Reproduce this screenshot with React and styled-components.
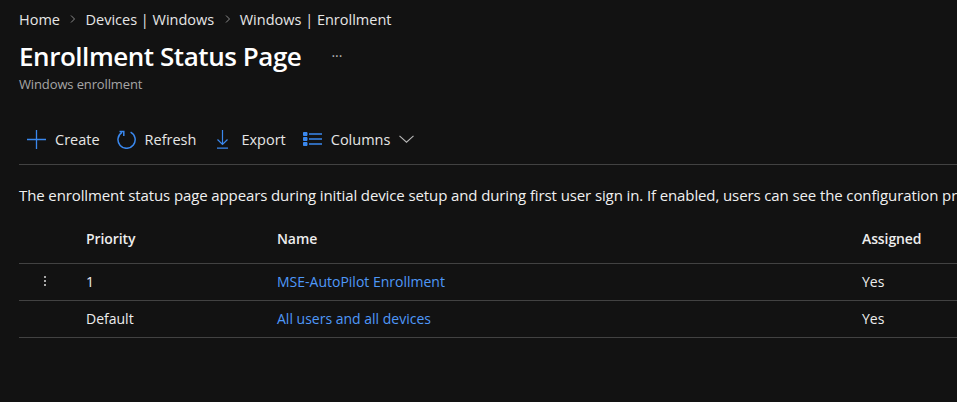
import React from "react";
import styled, { createGlobalStyle } from "styled-components";

const GlobalStyle = createGlobalStyle`
  html, body {
    margin: 0;
    background: #121212;
    overflow: hidden;
  }
  body {
    font-family: "Open Sans", "Noto Sans", "Liberation Sans", sans-serif;
    color: #fff;
  }
`;

const Page = styled.div`
  width: 957px;
  height: 402px;
  overflow: hidden;
  background: #121212;
  padding-left: 19px;
  box-sizing: border-box;
`;

const Breadcrumbs = styled.nav`
  display: flex;
  align-items: center;
  height: 20px;
  margin-top: 9px;
  font-size: 14.5px;
  color: #e6e6e6;
`;

const Chevron = styled.svg`
  width: 8px;
  height: 8px;
  margin: 0 8px 0 9.5px;
  stroke: #8a8a8a;
  fill: none;
`;

const TitleRow = styled.div`
  display: flex;
  align-items: center;
  height: 36px;
  margin-top: 9px;
`;

const Title = styled.h1`
  margin: 0;
  font-size: 26px;
  font-weight: 600;
  letter-spacing: -0.45px;
  color: #fff;
`;

const More = styled.span`
  margin-left: 30px;
  font-size: 14px;
  line-height: 1;
  color: #b5b5b5;
`;

const Subtitle = styled.div`
  height: 18px;
  margin-top: 1px;
  font-size: 13px;
  line-height: 18px;
  letter-spacing: -0.13px;
  color: #a6a6a6;
`;

const Toolbar = styled.div`
  display: flex;
  align-items: center;
  height: 49px;
  margin-top: 23px;
  padding: 0 0 2px 8px;
  box-sizing: border-box;
  border-bottom: 1px solid #424242;
`;

const ToolButton = styled.button`
  display: flex;
  align-items: center;
  gap: ${(p) => p.$gap || 8}px;
  margin: 0 ${(p) => p.$after || 0}px 0 0;
  padding: 0;
  height: 24px;
  border: 0;
  background: none;
  font: inherit;
  font-size: 14.5px;
  color: #e6e6e6;
  svg {
    flex: none;
    stroke: #3a88ee;
    fill: none;
  }
`;

const Caret = styled.svg`
  && {
    stroke: #b8b8b8;
  }
`;

const Description = styled.p`
  margin: 20px 0 0;
  height: 20px;
  font-size: 15px;
  line-height: 20px;
  letter-spacing: -0.11px;
  white-space: nowrap;
  color: #f0f0f0;
`;

const Row = styled.div`
  display: grid;
  grid-template-columns: 67px 191px 585px 1fr;
  align-items: center;
  height: ${(p) => p.$height}px;
  padding-bottom: 2px;
  box-sizing: border-box;
  border-bottom: 1px solid #424242;
  font-size: 14px;
  color: #ededed;
`;

const HeadRow = styled(Row)`
  margin-top: 15px;
  font-weight: 600;
  letter-spacing: -0.1px;
  padding-bottom: 7px;
`;

const Dots = styled.span`
  display: flex;
  flex-direction: column;
  gap: 2px;
  margin-left: 25px;
  i {
    width: 2px;
    height: 2px;
    background: #a8a8a8;
  }
`;

const NameLink = styled.a`
  color: #4f98f8;
`;

const rows = [
  { priority: "1", name: "MSE-AutoPilot Enrollment", assigned: "Yes", menu: true },
  { priority: "Default", name: "All users and all devices", assigned: "Yes" },
];

const App = () => (
  <Page>
    <GlobalStyle />
    <Breadcrumbs>
      Home
      <Chevron viewBox="0 0 8 8"><path d="M2 .5 5.5 4 2 7.5" /></Chevron>
      Devices | Windows
      <Chevron viewBox="0 0 8 8"><path d="M2 .5 5.5 4 2 7.5" /></Chevron>
      Windows | Enrollment
    </Breadcrumbs>
    <TitleRow>
      <Title>Enrollment Status Page</Title>
      <More>···</More>
    </TitleRow>
    <Subtitle>Windows enrollment</Subtitle>
    <Toolbar>
      <ToolButton $gap={9} $after={17}>
        <svg width="19" height="19" viewBox="0 0 19 19" strokeWidth="1.3"><path d="M9.5 0v19M0 9.5h19" /></svg>
        Create
      </ToolButton>
      <ToolButton $gap={9} $after={20}>
        <svg width="19" height="19" viewBox="0 0 19 19" strokeWidth="1.5"><path d="M5 2.4a8.6 8.6 0 1 0 8.6-.3M6.8 6V1.5H2.5" /></svg>
        Refresh
      </ToolButton>
      <ToolButton $gap={12} $after={17}>
        <svg width="13" height="19" viewBox="0 0 13 19" strokeWidth="1.2"><path d="M6.5 0v14M1.5 9.5l5 5 5-5M1 18.2h11" /></svg>
        Export
      </ToolButton>
      <ToolButton $gap={9}>
        <svg width="19" height="14" viewBox="0 0 19 14" strokeWidth="1.5">
          <path d="M6 2h13M6 7h13M6 12h13" />
          <path d="M.5.5h3.5v3h-3.5zM.5 5.5h3.5v3h-3.5zM.5 10.5h3.5v3h-3.5z" fill="#3a88ee" strokeWidth="1" />
        </svg>
        Columns
        <Caret width="15" height="8" viewBox="0 0 15 8" strokeWidth="1.1"><path d="M.5.8 7.5 7.2 14.5.8" /></Caret>
      </ToolButton>
    </Toolbar>
    <Description>
      The enrollment status page appears during initial device setup and during first user sign in. If enabled, users can see the configuration progress of assigned apps and profiles targeted to their device.
    </Description>
    <HeadRow $height={44}>
      <span />
      <span>Priority</span>
      <span>Name</span>
      <span>Assigned</span>
    </HeadRow>
    {rows.map((row) => (
      <Row key={row.name} $height={37}>
        {row.menu ? <Dots><i /><i /><i /></Dots> : <span />}
        <span>{row.priority}</span>
        <NameLink>{row.name}</NameLink>
        <span>{row.assigned}</span>
      </Row>
    ))}
  </Page>
);

export default App;
